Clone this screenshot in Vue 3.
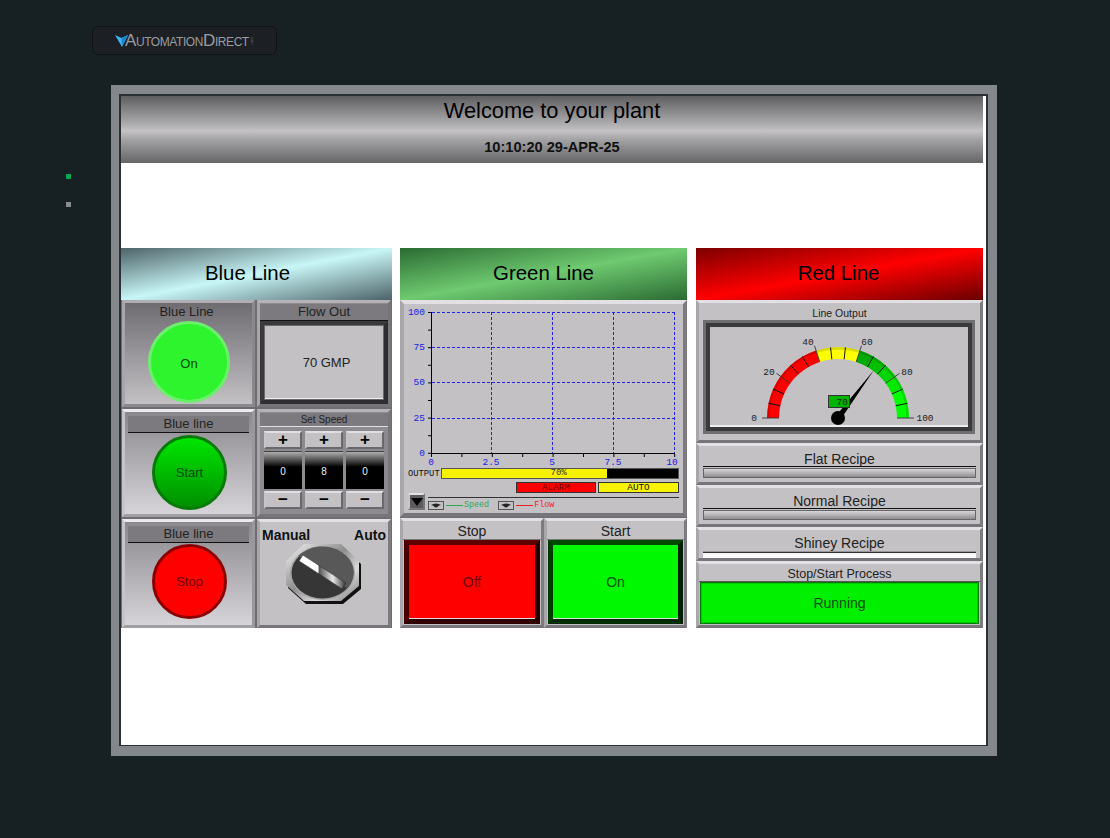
<template>
  <div class="page">
    <!-- Logo -->
    <div class="logo-row">
      <div class="logo">
        <svg class="logo-mark" viewBox="0 0 13 12"><path d="M0 0 L6.5 3 L13 0 L7 12 Z" fill="#3fb4ee"/><path d="M6.5 3 L13 0 L7 12 Z" fill="#1d86cc"/></svg>
        <span class="logo-text">AutomationDirect</span>
        <span class="logo-com">.com</span>
      </div>
    </div>

    <div class="main">
      <div class="pager">
        <span class="dot dot-on"></span>
        <span class="dot"></span>
      </div>

      <div class="frame">
        <div class="screen">
          <header class="plant-head">
            <div class="plant-title">Welcome to your plant</div>
            <div class="plant-time">10:10:20 29-APR-25</div>
          </header>

          <div class="lines">
            <!-- Blue line -->
            <section class="line">
              <h2 class="line-head head-blue">Blue Line</h2>
              <div class="blue-grid">
                <div class="tile tile-shade">
                  <div class="plain-label">Blue Line</div>
                  <div class="lamp lamp-on">On</div>
                </div>
                <div class="tile tile-dark">
                  <div class="band">Flow Out</div>
                  <div class="readout">70 GMP</div>
                </div>
                <div class="tile tile-light">
                  <div class="band band-rule">Blue line</div>
                  <div class="lamp lamp-start">Start</div>
                </div>
                <div class="tile tile-dark">
                  <div class="band band-small">Set Speed</div>
                  <div class="speed">
                    <div v-for="(d, i) in digits" :key="i" class="digit">
                      <div class="step">+</div>
                      <div class="digit-val">{{ d }}</div>
                      <div class="step">−</div>
                    </div>
                  </div>
                </div>
                <div class="tile tile-light">
                  <div class="band band-rule">Blue line</div>
                  <div class="lamp lamp-stop">Stop</div>
                </div>
                <div class="tile tile-flat">
                  <div class="switch-labels"><span>Manual</span><span>Auto</span></div>
                  <svg class="selector" viewBox="286 543 78 62">
                    <defs>
                      <linearGradient id="oct" x1="0" y1="0" x2="1" y2="1">
                        <stop offset="0" stop-color="#f6f6f6"/>
                        <stop offset="0.45" stop-color="#8d8d8d"/>
                        <stop offset="0.7" stop-color="#dcdcdc"/>
                        <stop offset="1" stop-color="#777"/>
                      </linearGradient>
                      <linearGradient id="handle" x1="0" y1="0" x2="1" y2="0">
                        <stop offset="0" stop-color="#fff"/>
                        <stop offset="0.4" stop-color="#fff"/>
                        <stop offset="0.43" stop-color="#555"/>
                        <stop offset="0.72" stop-color="#e8e8e8"/>
                        <stop offset="1" stop-color="#333"/>
                      </linearGradient>
                    </defs>
                    <path d="M307 546 L344 546 L362 563 L362 588 L344 603 L307 603 L289 587 L289 563 Z" fill="#111"/>
                    <path d="M305 543 L342 543 L360 560 L360 585 L342 600 L305 600 L287 584 L287 560 Z" fill="url(#oct)"/>
                    <ellipse cx="323.5" cy="572" rx="32.5" ry="27" fill="#a4a4a4"/>
                    <ellipse cx="323.5" cy="572" rx="31" ry="25.5" fill="#363636"/>
                    <path d="M299.2 555.1 A31 25.5 0 0 1 347.8 586.9 Z" fill="#585858"/>
                    <polygon points="303.9,554.1 300.1,559.9 343.1,587.9 346.9,582.1" fill="url(#handle)" stroke="#222" stroke-width="0.5"/>
                  </svg>
                </div>
              </div>
            </section>

            <!-- Green line -->
            <section class="line line-green">
              <h2 class="line-head head-green">Green Line</h2>
              <div class="green-body">
                <div class="tile tile-flat chart-tile">
                  <svg class="plot" viewBox="404 304 280 164">
                    <g stroke="#2222ee" stroke-width="1" stroke-dasharray="3 2" fill="none">
                      <line v-for="x in gridX" :key="'x' + x" :x1="x + 0.5" y1="312" :x2="x + 0.5" y2="453"/>
                      <line v-for="y in gridY" :key="'y' + y" x1="432" :y1="y + 0.5" x2="674" :y2="y + 0.5"/>
                    </g>
                    <g stroke="#000" stroke-width="1">
                      <line x1="431.5" y1="312" x2="431.5" y2="454"/>
                      <line x1="431" y1="453.5" x2="675" y2="453.5"/>
                      <line v-for="t in 9" :key="'ty' + t" x1="428" :y1="312.5 + (t - 1) * 17.6" x2="431" :y2="312.5 + (t - 1) * 17.6"/>
                      <line v-for="t in 9" :key="'tx' + t" :x1="431.5 + (t - 1) * 30.4" y1="454" :x2="431.5 + (t - 1) * 30.4" y2="457"/>
                    </g>
                    <g class="plot-text" text-anchor="end">
                      <text x="425" y="315">100</text>
                      <text x="425" y="350">75</text>
                      <text x="425" y="385">50</text>
                      <text x="425" y="421">25</text>
                      <text x="425" y="456">0</text>
                    </g>
                    <g class="plot-text" text-anchor="middle">
                      <text x="431" y="465">0</text>
                      <text x="491" y="465">2.5</text>
                      <text x="552" y="465">5</text>
                      <text x="613" y="465">7.5</text>
                      <text x="672" y="465">10</text>
                    </g>
                  </svg>
                  <div class="output-row">
                    <span class="output-label">OUTPUT</span>
                    <div class="output-bar">
                      <div class="output-fill" :style="{ width: output + '%' }"></div>
                      <span class="output-val">{{ output }}%</span>
                    </div>
                  </div>
                  <div class="status-row">
                    <span class="status status-alarm">ALARM</span>
                    <span class="status status-auto">AUTO</span>
                  </div>
                  <div class="legend-row">
                    <div class="legend-btn"><span class="legend-arrow"></span></div>
                    <div class="legend">
                      <div class="legend-item">
                        <svg class="eye" viewBox="0 0 16 9"><rect x="0.5" y="0.5" width="15" height="8" fill="#c3c1c4" stroke="#555"/><path d="M3 4 Q8 1 13 4 Q10 4.5 10 5.5 Q8 7.5 6 5.5 Q6 4.5 3 4 Z" fill="#222"/></svg>
                        <span class="legend-line line-speed"></span><span class="legend-name name-speed">Speed</span>
                      </div>
                      <div class="legend-item">
                        <svg class="eye" viewBox="0 0 16 9"><rect x="0.5" y="0.5" width="15" height="8" fill="#c3c1c4" stroke="#555"/><path d="M3 4 Q8 1 13 4 Q10 4.5 10 5.5 Q8 7.5 6 5.5 Q6 4.5 3 4 Z" fill="#222"/></svg>
                        <span class="legend-line line-flow"></span><span class="legend-name name-flow">Flow</span>
                      </div>
                    </div>
                  </div>
                </div>
                <div class="push-row">
                  <div class="tile tile-flat push">
                    <div class="push-label">Stop</div>
                    <div class="push-btn push-red">Off</div>
                  </div>
                  <div class="tile tile-flat push">
                    <div class="push-label">Start</div>
                    <div class="push-btn push-green">On</div>
                  </div>
                </div>
              </div>
            </section>

            <!-- Red line -->
            <section class="line">
              <h2 class="line-head head-red">Red Line</h2>
              <div class="red-body">
                <div class="tile tile-flat gauge-tile">
                  <div class="gauge-label">Line Output</div>
                  <div class="gauge-frame">
                    <svg class="gauge" viewBox="710 327 258 100">
                      <path v-for="s in segments" :key="s.i" :d="s.d" :stroke="s.color" stroke-width="12" fill="none"/>
                      <path :d="rim" stroke="#000" stroke-opacity="0.14" stroke-width="2.5" fill="none"/>
                      <line v-for="t in ticks" :key="t.i" :x1="t.x1" :y1="t.y1" :x2="t.x2" :y2="t.y2" :stroke="t.major ? '#333' : '#000'" stroke-width="0.9"/>
                      <g class="gauge-text">
                        <text x="754" y="421" text-anchor="middle">0</text>
                        <text x="769" y="375" text-anchor="middle">20</text>
                        <text x="808" y="345" text-anchor="middle">40</text>
                        <text x="867" y="345" text-anchor="middle">60</text>
                        <text x="907" y="375" text-anchor="middle">80</text>
                        <text x="925" y="421" text-anchor="middle">100</text>
                      </g>
                      <polygon points="835.6,416.2 840.4,419.8 874,370" fill="#000"/>
                      <circle cx="838" cy="418" r="7" fill="#000"/>
                      <rect x="828.5" y="395.5" width="21" height="12" fill="#00b400" stroke="#333"/>
                      <text x="848" y="405" text-anchor="end" class="gauge-text gauge-val">70</text>
                    </svg>
                  </div>
                </div>
                <div class="tile tile-flat recipe">
                  <div class="recipe-label">Flat Recipe</div>
                  <div class="recipe-strip"></div>
                </div>
                <div class="tile tile-flat recipe">
                  <div class="recipe-label">Normal Recipe</div>
                  <div class="recipe-strip"></div>
                </div>
                <div class="tile tile-flat recipe recipe-short">
                  <div class="recipe-label label-tight">Shiney Recipe</div>
                  <div class="recipe-shiny"></div>
                </div>
                <div class="tile tile-flat process">
                  <div class="process-label">Stop/Start Process</div>
                  <div class="process-btn">Running</div>
                </div>
              </div>
            </section>
          </div>
        </div>
      </div>
    </div>
  </div>
</template>

<script setup>
const digits = [0, 8, 0]
const output = 70
const gridX = [491, 552, 613, 674]
const gridY = [312, 347, 382, 418]

const cx = 838
const cy = 418

function pt(r, deg) {
  const a = (deg * Math.PI) / 180
  return [cx - r * Math.cos(a), cy - r * Math.sin(a)]
}

function arc(r, a0, a1) {
  const [x0, y0] = pt(r, a0)
  const [x1, y1] = pt(r, a1)
  return `M${x0.toFixed(2)} ${y0.toFixed(2)} A${r} ${r} 0 0 1 ${x1.toFixed(2)} ${y1.toFixed(2)}`
}

function segColor(i) {
  if (i < 6) return '#ff0000'
  if (i < 9) return '#ffff00'
  const g = Math.min(255, Math.round(170 + ((i - 9) / 4) * 85))
  return `rgb(0, ${g}, 0)`
}

const segments = Array.from({ length: 15 }, (_, i) => ({
  i,
  d: arc(65, i * 12, (i + 1) * 12),
  color: segColor(i)
}))

const rim = arc(69.5, 0, 180)

const ticks = Array.from({ length: 16 }, (_, i) => {
  const major = i % 3 === 0
  const [x1, y1] = pt(59, i * 12)
  const [x2, y2] = pt(major ? 76 : 71, i * 12)
  return { i, major, x1, y1, x2, y2 }
})
</script>

<style>
html, body {
  margin: 0;
  background: #172124;
}
</style>

<style scoped>
.page {
  width: 1110px;
  height: 838px;
  overflow: hidden;
  background: #172124;
  font-family: "Liberation Sans", Arial, sans-serif;
  color: #1a1a1a;
}

/* Logo */
.logo-row {
  height: 85px;
  padding: 26px 0 0 92px;
  box-sizing: border-box;
}

.logo {
  width: 185px;
  height: 29px;
  box-sizing: border-box;
  border: 1px solid #0e1316;
  border-radius: 6px;
  background: #1c1f24;
  display: flex;
  align-items: center;
  padding-left: 22px;
}

.logo-mark {
  width: 13px;
  height: 12px;
  flex-shrink: 0;
}

.logo-text {
  color: #9a9da0;
  font-size: 17px;
  font-variant: small-caps;
  letter-spacing: -0.42px;
  margin-left: -3px;
}

.logo-com {
  color: #777;
  font-size: 4px;
  writing-mode: vertical-rl;
  margin-left: 1px;
}

/* Main */
.main {
  display: flex;
  padding-left: 66px;
}

.pager {
  width: 45px;
  padding-top: 89px;
  display: flex;
  flex-direction: column;
  gap: 23px;
}

.dot {
  width: 5px;
  height: 5px;
  background: #8a8c8e;
}

.dot-on {
  background: #00a651;
}

.frame {
  width: 886px;
  height: 671px;
  box-sizing: border-box;
  padding: 9px 9px 10px 8px;
  background: #84888c;
}

.screen {
  height: 100%;
  box-sizing: border-box;
  border: 2px solid #2a3136;
  border-bottom-width: 1px;
  background: #fff;
}

.plant-head {
  width: 862px;
  height: 67px;
  background: linear-gradient(180deg, #5e5d60 0%, #a9a8aa 40%, #c4c2c5 52%, #a5a4a6 64%, #656466 100%);
  text-align: center;
  color: #000;
}

.plant-title {
  font-size: 21.8px;
  line-height: 26px;
  padding-top: 2px;
}

.plant-time {
  font-size: 14.6px;
  font-weight: 700;
  line-height: 16px;
  margin-top: 15px;
  color: #111;
}

.lines {
  display: grid;
  grid-template-columns: 271px 288px 287px;
  gap: 8px;
  width: 862px;
  margin-top: 85px;
}

.line {
  height: 380px;
  display: flex;
  flex-direction: column;
}

.line-green {
  width: 287px;
}

.line-head {
  margin: 0;
  height: 52px;
  line-height: 50px;
  font-size: 20.4px;
  font-weight: 400;
  text-align: center;
  color: #000;
  flex-shrink: 0;
}

.head-blue {
  padding-right: 18px;
  background: linear-gradient(to bottom right, #4d6368 0%, #c8f6f7 50%, #4d6368 100%);
}

.head-green {
  background: linear-gradient(to bottom right, #2a6b32 0%, #6fca70 50%, #2a6b32 100%);
}

.head-red {
  padding-right: 2px;
  background: linear-gradient(to bottom right, #7d0000 0%, #ff0000 50%, #6a0000 100%);
}

/* Shared bevelled tile */
.tile {
  box-sizing: border-box;
  border: 3px solid;
  border-color: #e2e0e4 #7d7b80 #77757a #a8a6aa;
  background: #c3c1c4;
  min-width: 0;
  min-height: 0;
}

.tile-flat {
  background: #c3c1c4;
}

.tile-shade {
  background: linear-gradient(180deg, #6e6c71 0%, #c3c1c4 100%);
  border-color: #b0aeb2 #8a888c #8a888c #a8a6aa;
  text-align: center;
}

.tile-dark {
  background: #8d8b90;
  border-color: #b5b3b7 #77757a #77757a #a8a6aa;
}

.tile-light {
  background: linear-gradient(180deg, #8a888c 0%, #d6d4d8 100%);
  border-color: #ebe9ed #9a989c #a0a0a4 #c6c4c8;
  border-width: 3px;
  padding: 3px 3px 0;
  text-align: center;
}

/* Blue column */
.blue-grid {
  flex: 1;
  display: grid;
  grid-template-columns: 133px 134px;
  grid-template-rows: 107px 108px 109px;
  gap: 2px;
  padding: 0 1px;
  background: #6f6d72;
}

.plain-label {
  font-size: 13px;
  line-height: 16px;
  color: #222;
  margin-top: 1px;
  margin-left: -4px;
}

.band {
  height: 16px;
  line-height: 16px;
  font-size: 13px;
  text-align: center;
  background: #7c7a7e;
  color: #222;
  border-bottom: 1px solid #111;
  box-sizing: content-box;
  margin: 1px 0 0;
}

.band-rule {
  background: #7c7a7e;
}

.band-small {
  height: 13px;
  line-height: 13px;
  font-size: 10px;
  margin: 1px 0 0;
  border-bottom-color: #e0e0e0;
}

.lamp {
  box-sizing: border-box;
  border-radius: 50%;
  display: flex;
  align-items: center;
  justify-content: center;
  font-size: 13px;
  color: #064a06;
}

.lamp-on {
  width: 82px;
  height: 82px;
  margin: 1px 0 0 23px;
  background: #2ef42e;
  border: 3px solid #6cef6c;
  padding-top: 2px;
}

.lamp-start {
  width: 75px;
  height: 75px;
  margin: 2px 0 0 24px;
  border: 3px solid #067a06;
  background: linear-gradient(180deg, #00e600 0%, #008f00 100%);
}

.lamp-stop {
  width: 75px;
  height: 75px;
  margin: 1px 0 0 24px;
  border: 3px solid #8a0000;
  background: #ff0000;
  color: #6e0000;
}

.readout {
  box-sizing: border-box;
  height: 83px;
  margin: 0;
  padding-left: 5px;
  border: 4px solid;
  border-color: #3a3a3c #2e2e30 #2e2e30 #3a3a3c;
  outline: 1px solid #6a686c;
  outline-offset: -5px;
  background: #c3c1c4;
  box-shadow: inset 0 -2px 0 #eee;
  display: flex;
  align-items: center;
  justify-content: center;
  font-size: 13px;
  color: #222;
}

.speed {
  display: grid;
  grid-template-columns: repeat(3, 1fr);
  gap: 3px;
  padding: 4px 4px 0;
}

.digit {
  display: flex;
  flex-direction: column;
  gap: 2px;
}

.step {
  box-sizing: border-box;
  height: 18px;
  border: 2px solid;
  border-color: #e0dee2 #6a686c #6a686c #c6c4c8;
  background: #c3c1c4;
  color: #000;
  font-size: 17px;
  font-weight: 700;
  line-height: 13px;
  text-align: center;
}

.digit-val {
  height: 38px;
  background: linear-gradient(180deg, #111 0%, #a8a8a8 4%, #000 42%);
  color: #eee;
  font-family: "Liberation Sans", sans-serif;
  font-size: 10px;
  line-height: 41px;
  text-align: center;
}

.switch-labels {
  display: flex;
  justify-content: space-between;
  font-size: 14px;
  font-weight: 700;
  color: #111;
  line-height: 16px;
  padding: 5px 2px 0 2px;
}

.selector {
  display: block;
  width: 78px;
  height: 62px;
  margin: 1px 0 0 25px;
}

/* Green column */
.green-body {
  flex: 1;
  display: flex;
  flex-direction: column;
  gap: 1px;
  background: #6f6d72;
}

.chart-tile {
  height: 217px;
  border-width: 4px;
  flex-shrink: 0;
}

.plot {
  display: block;
  width: 280px;
  height: 164px;
}

.plot-text text {
  font-family: "Liberation Mono", monospace;
  font-size: 9.5px;
  fill: #2020e6;
  stroke: none;
}

.output-row {
  display: flex;
  align-items: center;
  height: 11px;
  padding: 0 4px 0 4px;
}

.output-label {
  width: 33px;
  flex-shrink: 0;
  font-family: "Liberation Mono", monospace;
  font-size: 8.8px;
  color: #111;
}

.output-bar {
  position: relative;
  flex: 1;
  height: 11px;
  box-sizing: border-box;
  border: 1px solid #555;
  background: #000;
}

.output-fill {
  height: 100%;
  background: #f7f200;
}

.output-val {
  position: absolute;
  left: 46%;
  top: -1px;
  font-family: "Liberation Mono", monospace;
  font-size: 9px;
  line-height: 11px;
  color: #333;
}

.status-row {
  display: flex;
  justify-content: flex-end;
  gap: 2px;
  margin-top: 3px;
  padding-right: 4px;
}

.status {
  box-sizing: border-box;
  height: 11px;
  width: 81px;
  border: 1px solid #333;
  font-family: "Liberation Mono", monospace;
  font-size: 9.3px;
  display: flex;
  align-items: center;
  justify-content: center;
}

.status-alarm {
  width: 80px;
  background: #ff0000;
  color: #600;
}

.status-auto {
  background: #f7f200;
  color: #111;
}

.legend-row {
  display: flex;
  padding: 0 4px 0 4px;
}

.legend-btn {
  width: 17px;
  height: 17px;
  box-sizing: border-box;
  border: 2px solid;
  border-color: #e4e2e6 #77757a #77757a #c8c6ca;
  background: #5c5c5e;
  display: flex;
  align-items: center;
  justify-content: center;
  flex-shrink: 0;
}

.legend-arrow {
  width: 0;
  height: 0;
  border-left: 6px solid transparent;
  border-right: 6px solid transparent;
  border-top: 8px solid #000;
}

.legend {
  flex: 1;
  margin: 4px 0 0 3px;
  border-top: 1px solid #333;
  padding: 2px 0 0 0;
  display: flex;
  gap: 9px;
  height: 10px;
}

.legend-item {
  display: flex;
  align-items: center;
  gap: 1px;
}

.eye {
  width: 16px;
  height: 9px;
  flex-shrink: 0;
}

.legend-line {
  width: 17px;
  height: 1px;
  margin-left: 1px;
}

.line-speed {
  background: #2ea655;
}

.line-flow {
  background: #f02020;
}

.legend-name {
  font-family: "Liberation Mono", monospace;
  font-size: 8.4px;
  line-height: 9px;
}

.name-speed {
  color: #2ea655;
}

.name-flow {
  color: #f02020;
}

.push-row {
  flex: 1;
  display: grid;
  grid-template-columns: 144px 143px;
}

.push {
  padding: 0;
  text-align: center;
}

.push-label {
  height: 18px;
  line-height: 21px;
  font-size: 14px;
  color: #222;
  border-bottom: 1px solid #777;
}

.push-btn {
  box-sizing: border-box;
  height: 84px;
  margin: 0 1px;
  border: 5px solid;
  display: flex;
  align-items: center;
  justify-content: center;
  font-size: 14px;
  box-shadow: inset 0 -1px 0 #ddd;
}

.push-red {
  background: #ff0000;
  border-color: #5e0000 #250000 #300000 #4a0000;
  color: #6e0000;
}

.push-green {
  background: #00f800;
  border-color: #004a00 #001e00 #002a00 #003c00;
  color: #045204;
}

/* Red column */
.red-body {
  flex: 1;
  display: flex;
  flex-direction: column;
  background: #6f6d72;
}

.gauge-tile {
  height: 143px;
  flex-shrink: 0;
}

.gauge-label {
  height: 17px;
  line-height: 20px;
  font-size: 10.5px;
  text-align: center;
  color: #222;
}

.gauge-frame {
  box-sizing: border-box;
  width: 266px;
  height: 108px;
  margin: 3px 0 0 7px;
  border: 4px solid #3a3a3c;
  outline: 3px solid #6e6e70;
  background: #c3c1c4;
  box-shadow: inset 0 -2px 0 #eee;
}

.gauge {
  display: block;
  width: 258px;
  height: 100px;
}

.gauge-text text,
text.gauge-text {
  font-family: "Liberation Mono", monospace;
  font-size: 9.5px;
  fill: #222;
}

.recipe {
  height: 42px;
  flex-shrink: 0;
}

.recipe-short {
  height: 34px;
}

.recipe-label {
  height: 20px;
  line-height: 26px;
  font-size: 14px;
  text-align: center;
  color: #222;
  border-bottom: 1px solid #111;
  margin: 0 4px;
}

.label-tight {
  height: 17px;
  border-bottom: 0;
}

.recipe-strip {
  box-sizing: border-box;
  height: 10px;
  margin: 1px 4px 0;
  border: 1px solid #666;
  background: linear-gradient(180deg, #d8d6da 0%, #c3c1c4 30%, #8f8d91 100%);
}

.recipe-shiny {
  height: 11px;
  margin: 0 4px;
  background: linear-gradient(180deg, transparent 0%, transparent 36%, #8f8d91 42%, #333 45%, #333 53%, #f4f4f4 56%, #fff 100%);
  clip-path: polygon(0 0, 100% 0, 100% 100%, 0 100%);
}

.process {
  flex: 1;
}

.process-label {
  height: 17px;
  line-height: 20px;
  font-size: 12.5px;
  text-align: center;
  color: #222;
  border-bottom: 1px solid #555;
}

.process-btn {
  box-sizing: border-box;
  height: 42px;
  margin: 0 1px;
  border: 1px solid #007a00;
  background: #00f000;
  display: flex;
  align-items: center;
  justify-content: center;
  font-size: 14px;
  color: #064a06;
  box-shadow: inset 0 0 0 1px #00c800;
}
</style>
